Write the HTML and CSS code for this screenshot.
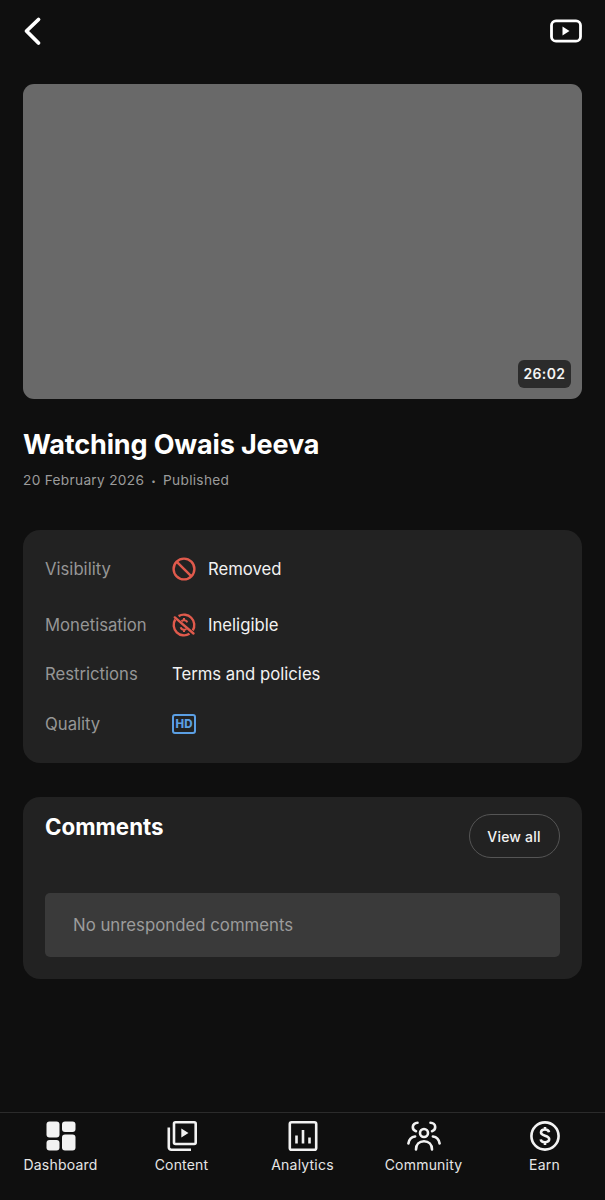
FILE: index.html
```html
<!DOCTYPE html>
<html lang="en">
<head>
    <meta charset="UTF-8">
    <meta name="viewport" content="width=device-width, initial-scale=1.0">
    <title>Watching Owais Jeeva</title>
    <link rel="stylesheet" href="styles.css">
</head>
<body>
    <div class="page">
        <header class="topbar">
            <svg class="icon-back" viewBox="0 0 20 30" fill="none" stroke="#fff" stroke-width="3.8" stroke-linecap="round" stroke-linejoin="round"><path d="M15.5 3.500 3.500 15 15.500 27"/></svg>
            <svg class="icon-studio" viewBox="0 0 32 24" fill="none"><rect x="1.500" y="1.800" width="29" height="20.400" rx="4.500" stroke="#fff" stroke-width="2.800"/><path d="M12.500 7.600v8.800l7-4.400z" fill="#fff"/></svg>
        </header>

        <div class="thumb">
            <span class="duration">26:02</span>
        </div>

        <h1 class="title">Watching Owais Jeeva</h1>
        <p class="meta">20 February 2026<span class="dot">•</span>Published</p>

        <section class="card details">
            <div class="row row-visibility">
                <span class="label">Visibility</span>
                <span class="value">
                    <svg class="status-icon" viewBox="0 0 24 24" fill="none" stroke="#e05a4c" stroke-width="2.400"><circle cx="12" cy="12" r="10.400"/><path d="M4.800 4.800 19.200 19.200"/></svg>
                    Removed
                </span>
            </div>
            <div class="row row-monetisation">
                <span class="label">Monetisation</span>
                <span class="value">
                    <svg class="status-icon" viewBox="0 0 24 24" fill="none" stroke="#e05a4c" stroke-width="2.400"><path d="M20.800 17.400A10.400 10.400 0 0 0 6.600 3.100M3.200 6.500a10.400 10.400 0 0 0 14.300 14.300"/><path d="M2.800 4.400 21.500 20.500" stroke-linecap="round"/><path d="M15.200 9.400c-.4-1.300-1.700-2.100-3.200-2.100-1.100 0-2 .4-2.500 1M12 4.900v2.400M12 16.700v2.400M8.700 14.200c.4 1.500 1.700 2.500 3.300 2.500 1 0 1.800-.3 2.400-.7" stroke-width="2"/></svg>
                    Ineligible
                </span>
            </div>
            <div class="row row-restrictions">
                <span class="label">Restrictions</span>
                <span class="value">Terms and policies</span>
            </div>
            <div class="row">
                <span class="label">Quality</span>
                <span class="value">
                    <span class="hd">HD</span>
                </span>
            </div>
        </section>

        <section class="card comments">
            <div class="comments-head">
                <h2>Comments</h2>
                <button class="view-all">View all</button>
            </div>
            <div class="empty">No unresponded comments</div>
        </section>
    </div>

    <nav class="tabbar">
        <a class="tab">
            <svg viewBox="0 0 30 30" fill="#f2f2f2"><rect x="0.500" y="0.500" width="13" height="16" rx="3"/><rect x="16" y="0.500" width="13.500" height="10.500" rx="3"/><rect x="0.500" y="19" width="13" height="10.500" rx="3"/><rect x="16" y="13.500" width="13.500" height="16" rx="3"/></svg>
            Dashboard
        </a>
        <a class="tab">
            <svg viewBox="0 0 30 30" fill="none" stroke="#f2f2f2" stroke-width="2.600"><rect x="7" y="1.300" width="21.700" height="21.700" rx="1.500"/><path d="M1.800 6.500v19.700a2.500 2.500 0 0 0 2.500 2.500h19.700"/><path d="M14.300 7.400v9.200l7.200-4.600z" fill="#f2f2f2" stroke="none"/></svg>
            Content
        </a>
        <a class="tab">
            <svg viewBox="0 0 30 30" fill="none" stroke="#f2f2f2" stroke-width="2.600"><rect x="1.800" y="1.300" width="26.400" height="27.400" rx="1.800"/><path d="M8.500 14.500v8M15 9v13.500M21.500 16.500v6"/></svg>
            Analytics
        </a>
        <a class="tab tab-community">
            <svg viewBox="0 0 34 30" fill="none" stroke="#f2f2f2" stroke-width="2.600" stroke-linecap="round"><circle cx="17" cy="12" r="4"/><path d="M9 28.500c0-5 3.400-8.200 8-8.200s8 3.200 8 8.200"/><path d="M10.500 1.800c-2.600 0-4.700 1.900-4.700 4.300 0 2 1.300 3.600 3.200 4.100M23.500 1.800c2.600 0 4.700 1.900 4.700 4.300 0 2-1.300 3.600-3.200 4.100"/><path d="M1.400 22.500c.6-4 3.300-6.600 6.700-7M32.600 22.500c-.6-4-3.300-6.600-6.700-7"/></svg>
            Community
        </a>
        <a class="tab tab-earn">
            <svg viewBox="0 0 32 32" fill="none" stroke="#f2f2f2"><circle cx="16" cy="16" r="14.500" stroke-width="2.800"/><path d="M20.300 12c-.3-1.700-2-2.900-4.300-2.900-2.500 0-4.300 1.300-4.300 3.200 0 4.300 8.800 2.500 8.800 7 0 2-1.900 3.300-4.500 3.300-2.500 0-4.300-1.100-4.600-3M16 6.500v3M16 23v2.500" stroke-width="2.700"/></svg>
            Earn
        </a>
    </nav>
</body>
</html>
```

FILE: styles.css
```css
body {
    margin: 0;
    height: 1200px;
    background-color: #0f0f0f;
    color: #fff;
    font-family: Inter, "Liberation Sans", sans-serif;
    display: flex;
    flex-direction: column;
    overflow: hidden;
}
.page {
    flex: 1;
    padding: 0 23px;
}
.topbar {
    height: 84px;
    display: flex;
    justify-content: space-between;
    align-items: flex-start;
}
.icon-back {
    width: 20px;
    height: 30px;
    margin-top: 16px;
}
.icon-studio {
    width: 32px;
    height: 24px;
    margin-top: 19px;
}
.thumb {
    box-sizing: border-box;
    height: 315px;
    background-color: #696969;
    border-radius: 11px;
    display: flex;
    justify-content: flex-end;
    align-items: flex-end;
    padding: 0 11px 11px 0;
}
.duration {
    background-color: #2b2b2b;
    border-radius: 6px;
    font-size: 14px;
    font-weight: 600;
    letter-spacing: 0.4px;
    line-height: 28px;
    padding: 0 5.500px;
    color: #f4f4f4;
}
.title {
    margin: 29px 0 0;
    font-size: 27px;
    line-height: 34px;
    font-weight: 700;
    letter-spacing: -0.150px;
}
.meta {
    margin: 8px 0 0;
    font-size: 13.700px;
    line-height: 20px;
    letter-spacing: 0.300px;
    color: #9b9b9b;
}
.dot {
    font-size: 8px;
    margin: 0 7px;
    vertical-align: 1px;
}
.card {
    background-color: #222;
    border-radius: 17px;
}
.details {
    margin-top: 39px;
    height: 233px;
    box-sizing: border-box;
    padding-top: 21px;
}
.row {
    display: flex;
    align-items: center;
    height: 36px;
    margin-bottom: 20px;
    padding-left: 22px;
    font-size: 16.700px;
}
.row-monetisation {
    margin-bottom: 13px;
}
.row-restrictions {
    margin-bottom: 14px;
}
.label {
    width: 127px;
    color: #969696;
}
.value {
    display: flex;
    align-items: center;
    gap: 12px;
    color: #f2f2f2;
}
.status-icon {
    width: 24px;
    height: 24px;
}
.hd {
    width: 20px;
    height: 16px;
    border: 2px solid #5b9fe3;
    border-radius: 3px;
    color: #5b9fe3;
    font-size: 11.500px;
    font-weight: 800;
    line-height: 16px;
    text-align: center;
}
.comments {
    margin-top: 34px;
    height: 182px;
    box-sizing: border-box;
    padding: 17px 22.500px 0 22px;
}
.comments-head {
    display: flex;
    justify-content: space-between;
    align-items: flex-start;
}
.comments h2 {
    margin: 0;
    font-size: 22.300px;
    line-height: 26px;
    font-weight: 700;
}
.view-all {
    width: 91px;
    height: 44px;
    background: none;
    border: 1px solid #555;
    border-radius: 22px;
    color: #f2f2f2;
    font-family: inherit;
    font-size: 14px;
    font-weight: 500;
    letter-spacing: 0.200px;
}
.empty {
    margin-top: 35px;
    height: 64px;
    line-height: 64px;
    background-color: #3a3a3a;
    border-radius: 5px;
    padding-left: 28px;
    font-size: 16.800px;
    color: #9c9c9c;
}
.tabbar {
    height: 88px;
    border-top: 1px solid #2b2b2b;
    display: flex;
    padding: 8px 0 0;
    box-sizing: border-box;
    justify-content: space-around;
}
.tab {
    width: 121px;
    display: flex;
    flex-direction: column;
    align-items: center;
    font-size: 14px;
    line-height: 18px;
    letter-spacing: 0.200px;
    color: #e6e6e6;
}
.tab svg {
    width: 30px;
    height: 30px;
    margin-bottom: 5px;
}
.tab-community svg {
    width: 34px;
}
.tab-earn svg {
    width: 32px;
}
```
